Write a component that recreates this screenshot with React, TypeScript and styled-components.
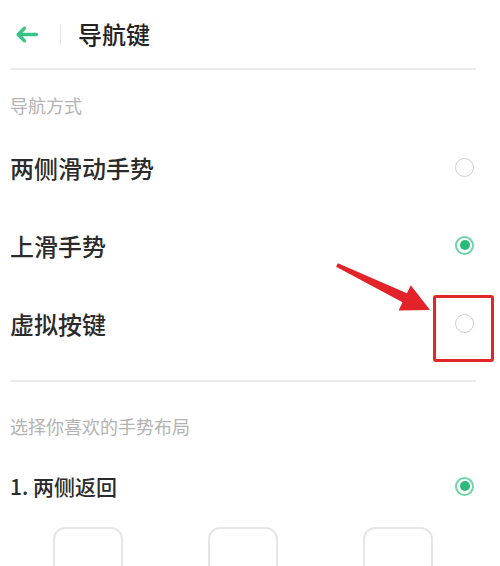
import React from 'react';
import styled, { createGlobalStyle } from 'styled-components';

const GlobalStyle = createGlobalStyle`
  html, body {
    margin: 0;
    padding: 0;
    background: #ffffff;
  }
  body {
    font-family: "Noto Sans CJK SC", "Noto Sans", sans-serif;
    color: #262626;
  }
`;

const Page = styled('div')`
  position: relative;
  width: 500px;
  height: 566px;
  overflow: hidden;
  background: #fff;
`;

const Header = styled('header')`
  height: 68px;
  display: flex;
  align-items: center;
  padding-left: 14px;
`;

const BackIcon = styled('svg')`
  width: 25px;
  height: 25px;
  display: block;
`;

const HeaderDivider = styled('span')`
  width: 1px;
  height: 21px;
  background: #e3e3e3;
  margin-left: 21px;
`;

const Title = styled('h1')`
  margin: 0 0 0 17px;
  font-size: 24px;
  font-weight: 500;
  line-height: 1;
  color: #222;
`;

const Separator = styled('div')<{ $top?: number }>`
  height: 2px;
  margin: ${({ $top }) => $top ?? 0}px 24px 0 10px;
  background: #ececec;
`;

const SectionLabel = styled('div')<{ $pt: number; $pb: number }>`
  padding: ${({ $pt }) => $pt}px 0 ${({ $pb }) => $pb}px 10px;
  font-size: 18px;
  line-height: 18px;
  color: #b3b3b3;
`;

const OptionRow = styled('div')<{ $height: number; $size: number }>`
  height: ${({ $height }) => $height}px;
  display: flex;
  align-items: center;
  justify-content: space-between;
  padding: 0 26px 0 10px;
  font-size: ${({ $size }) => $size}px;
  font-weight: 500;
  color: #2b2b2b;
`;

const Radio = styled('span')<{ $checked?: boolean }>`
  box-sizing: border-box;
  width: 19px;
  height: 19px;
  border-radius: 50%;
  display: flex;
  align-items: center;
  justify-content: center;
  border: ${({ $checked }) =>
    $checked ? '2.5px solid #6fd4a7' : '1.5px solid #cfcfcf'};
  background: #fff;

  &::after {
    content: '';
    display: ${({ $checked }) => ($checked ? 'block' : 'none')};
    width: 10px;
    height: 10px;
    border-radius: 50%;
    background: #29bb79;
  }
`;

const Layouts = styled('div')`
  display: flex;
  gap: 85px;
  padding: 11px 0 0 53px;
`;

const LayoutCard = styled('div')`
  box-sizing: border-box;
  width: 70px;
  height: 90px;
  border: 2px solid #e6e6e6;
  border-radius: 12px;
`;

const HighlightBox = styled('div')`
  position: absolute;
  left: 433px;
  top: 295px;
  width: 61px;
  height: 67px;
  box-sizing: border-box;
  border: 3px solid #e02626;
  border-radius: 3px;
  pointer-events: none;
`;

const PointerArrow = styled('svg')`
  position: absolute;
  left: 330px;
  top: 255px;
  width: 110px;
  height: 65px;
  pointer-events: none;
`;

const navOptions = [
  { label: '两侧滑动手势', checked: false },
  { label: '上滑手势', checked: true },
  { label: '虚拟按键', checked: false },
];

function App() {
  return (
    <Page>
      <GlobalStyle />
      <Header>
        <BackIcon viewBox="0 0 24 24" fill="none">
          <path
            d="M21.5 12H4M10 6L4 12l6 6"
            stroke="#38c487"
            strokeWidth="3.2"
            strokeLinecap="round"
            strokeLinejoin="round"
          />
        </BackIcon>
        <HeaderDivider />
        <Title>导航键</Title>
      </Header>
      <Separator />

      <SectionLabel $pt={26} $pb={14}>导航方式</SectionLabel>
      {navOptions.map((opt) => (
        <OptionRow key={opt.label} $height={78} $size={24}>
          <span>{opt.label}</span>
          <Radio $checked={opt.checked} />
        </OptionRow>
      ))}

      <Separator $top={18} />

      <SectionLabel $pt={35} $pb={21}>选择你喜欢的手势布局</SectionLabel>
      <OptionRow $height={60} $size={21}>
        <span>1. 两侧返回</span>
        <Radio $checked />
      </OptionRow>

      <Layouts>
        <LayoutCard />
        <LayoutCard />
        <LayoutCard />
      </Layouts>

      {/* red annotation over the screenshot */}
      <PointerArrow viewBox="330 255 110 65">
        <polygon
          points="337.9,263.2 406.9,293.3 410.8,285.2 430,310 398.6,310.4 402.5,302.3 336.1,266.8"
          fill="#e3232a"
        />
      </PointerArrow>
      <HighlightBox />
    </Page>
  );
}

export default App;
